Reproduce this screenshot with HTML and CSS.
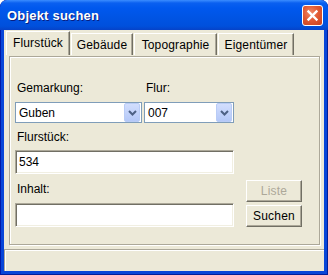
FILE: index.html
```html
<html>

<head>
    <title>Objekt suchen</title>
    <link rel="stylesheet" href="styles.css">
</head>

<body class="body">
    <div class="window">
        <div class="titleBar">
            <span class="titleText">Objekt suchen</span>
            <span class="closeButton">
                <svg width="13" height="13" viewBox="0 0 13 13">
                    <path d="M2.5 2.5 L10.5 10.5 M10.5 2.5 L2.5 10.5" stroke="#fff" stroke-width="2.4" stroke-linecap="square" fill="none"/>
                </svg>
            </span>
        </div>
        <div class="client">
            <div class="tabRow">
                <div class="tab tabSelected">Flurstück</div>
                <div class="tab tabGebaeude">Gebäude</div>
                <div class="tab tabTopo">Topographie</div>
                <div class="tab tabEigentuemer">Eigentümer</div>
            </div>
            <div class="panel">
                <div class="formColumn">
                    <div class="pairRow">
                        <div class="label labelWide">Gemarkung:</div>
                        <div class="label">Flur:</div>
                    </div>
                    <div class="pairRow comboRow">
                        <div class="combo comboWide">
                            <span class="comboText">Guben</span>
                            <span class="comboButton">
                                <svg width="9" height="6" viewBox="0 0 9 6">
                                    <path d="M1 1 L4.5 4.5 L8 1" stroke="#4D6185" stroke-width="2" fill="none"/>
                                </svg>
                            </span>
                        </div>
                        <div class="combo comboNarrow">
                            <span class="comboText">007</span>
                            <span class="comboButton">
                                <svg width="9" height="6" viewBox="0 0 9 6">
                                    <path d="M1 1 L4.5 4.5 L8 1" stroke="#4D6185" stroke-width="2" fill="none"/>
                                </svg>
                            </span>
                        </div>
                    </div>
                    <div class="label labelFlurstueck">Flurstück:</div>
                    <div class="textField fieldFlurstueck">534</div>
                    <div class="label labelInhalt">Inhalt:</div>
                    <div class="textField fieldInhalt"></div>
                </div>
                <div class="buttonColumn">
                    <div class="button buttonDisabled">Liste</div>
                    <div class="button">Suchen</div>
                </div>
            </div>
            <div class="statusBar"></div>
        </div>
    </div>
</body>

</html>
```

FILE: styles.css
```css
* {
    box-sizing: border-box;
}

.body {
    margin: 0;
    background-color: #ffffff;
    font-family: "Liberation Sans", Arial, sans-serif;
    font-size: 12px;
    color: #000000;
}

.window {
    width: 328px;
    height: 275px;
    display: flex;
    flex-direction: column;
    background-color: #0846D8;
    border-radius: 7px 7px 0 0;
    box-shadow: inset 1px 0 0 #0019A8, inset -1px 0 0 #001E9A, inset 0 -1px 0 #001E9A;
    overflow: hidden;
}

.titleBar {
    height: 30px;
    display: flex;
    align-items: center;
    justify-content: space-between;
    padding: 0 5px 0 7px;
    background: linear-gradient(#3B8DFF 0, #0A60F0 3px, #0058EE 8px, #0054E3 18px, #0050DC 26px, #0642C8 30px);
    border-radius: 7px 7px 0 0;
}

.titleText {
    color: #ffffff;
    font-weight: bold;
    font-size: 13px;
    letter-spacing: 0.2px;
    text-shadow: 1px 1px 0 #0A1E80;
    margin-top: 1px;
}

.closeButton {
    width: 21px;
    height: 21px;
    display: flex;
    align-items: center;
    justify-content: center;
    border: 1px solid #ffffff;
    border-radius: 3px;
    background: radial-gradient(circle at 40% 35%, #F08A6A 0, #E25A34 45%, #C8401C 100%);
}

.client {
    flex: 1;
    margin: 0 4px 4px 4px;
    background-color: #ECE9D8;
    display: flex;
    flex-direction: column;
}

.tabRow {
    height: 25px;
    display: flex;
    align-items: flex-end;
    padding-left: 2px;
}

.tab {
    height: 22px;
    display: flex;
    align-items: center;
    justify-content: center;
    border-top: 1px solid #ffffff;
    border-left: 1px solid #ffffff;
    border-right: 1px solid #716F64;
    box-shadow: inset -1px 0 0 #ACA899;
    margin-right: 1px;
    letter-spacing: 0.15px;
}

.tabSelected {
    width: 64px;
    height: 24px;
    padding-bottom: 1px;
}

.tabGebaeude {
    width: 62px;
}

.tabTopo {
    width: 83px;
}

.tabEigentuemer {
    width: 76px;
}

.panel {
    height: 189px;
    margin: 1px 4px 0 5px;
    border: 1px solid #ACA899;
    box-shadow: inset 1px 1px 0 #ffffff, 1px 1px 0 #ffffff;
    display: flex;
    padding: 24px 0 0 5px;
}

.formColumn {
    width: 219px;
    display: flex;
    flex-direction: column;
}

.pairRow {
    display: flex;
    gap: 2px;
}

.label {
    height: 15px;
    line-height: 15px;
    padding-left: 2px;
}

.labelWide {
    width: 127px;
}

.comboRow {
    margin-top: 6px;
}

.combo {
    height: 21px;
    background-color: #ffffff;
    border: 1px solid #7F9DB9;
    display: flex;
    align-items: center;
    justify-content: space-between;
    padding: 0 1px 0 3px;
}

.comboWide {
    width: 127px;
}

.comboNarrow {
    width: 90px;
}

.comboButton {
    width: 16px;
    height: 19px;
    display: flex;
    align-items: center;
    justify-content: center;
    border: 1px solid #B9CCF6;
    border-radius: 2px;
    background: linear-gradient(#D2DEFD, #B4C8F8);
}

.labelFlurstueck {
    margin-top: 7px;
}

.textField {
    height: 24px;
    background-color: #ffffff;
    border-top: 1px solid #ACA899;
    border-left: 1px solid #ACA899;
    border-right: 1px solid #ffffff;
    border-bottom: 1px solid #ffffff;
    box-shadow: inset 1px 1px 0 #716F64, inset -1px -1px 0 #F1EFE2;
    padding-left: 3px;
    line-height: 22px;
}

.fieldFlurstueck {
    margin-top: 5px;
}

.labelInhalt {
    margin-top: 8px;
}

.fieldInhalt {
    margin-top: 6px;
}

.buttonColumn {
    width: 56px;
    margin-left: 12px;
    display: flex;
    flex-direction: column;
    justify-content: flex-end;
    gap: 3px;
    padding-bottom: 17px;
}

.button {
    height: 22px;
    display: flex;
    align-items: center;
    justify-content: center;
    background-color: #ECE9D8;
    border-top: 1px solid #ffffff;
    border-left: 1px solid #ffffff;
    border-right: 1px solid #716F64;
    border-bottom: 1px solid #716F64;
    box-shadow: inset -1px -1px 0 #ACA899;
    letter-spacing: 0.2px;
}

.buttonDisabled {
    color: #ACA899;
}

.statusBar {
    flex: 1;
    margin-top: 4px;
    border-top: 1px solid #ACA899;
    border-left: 1px solid #ACA899;
    box-shadow: inset 1px 1px 0 #ffffff;
}
```
